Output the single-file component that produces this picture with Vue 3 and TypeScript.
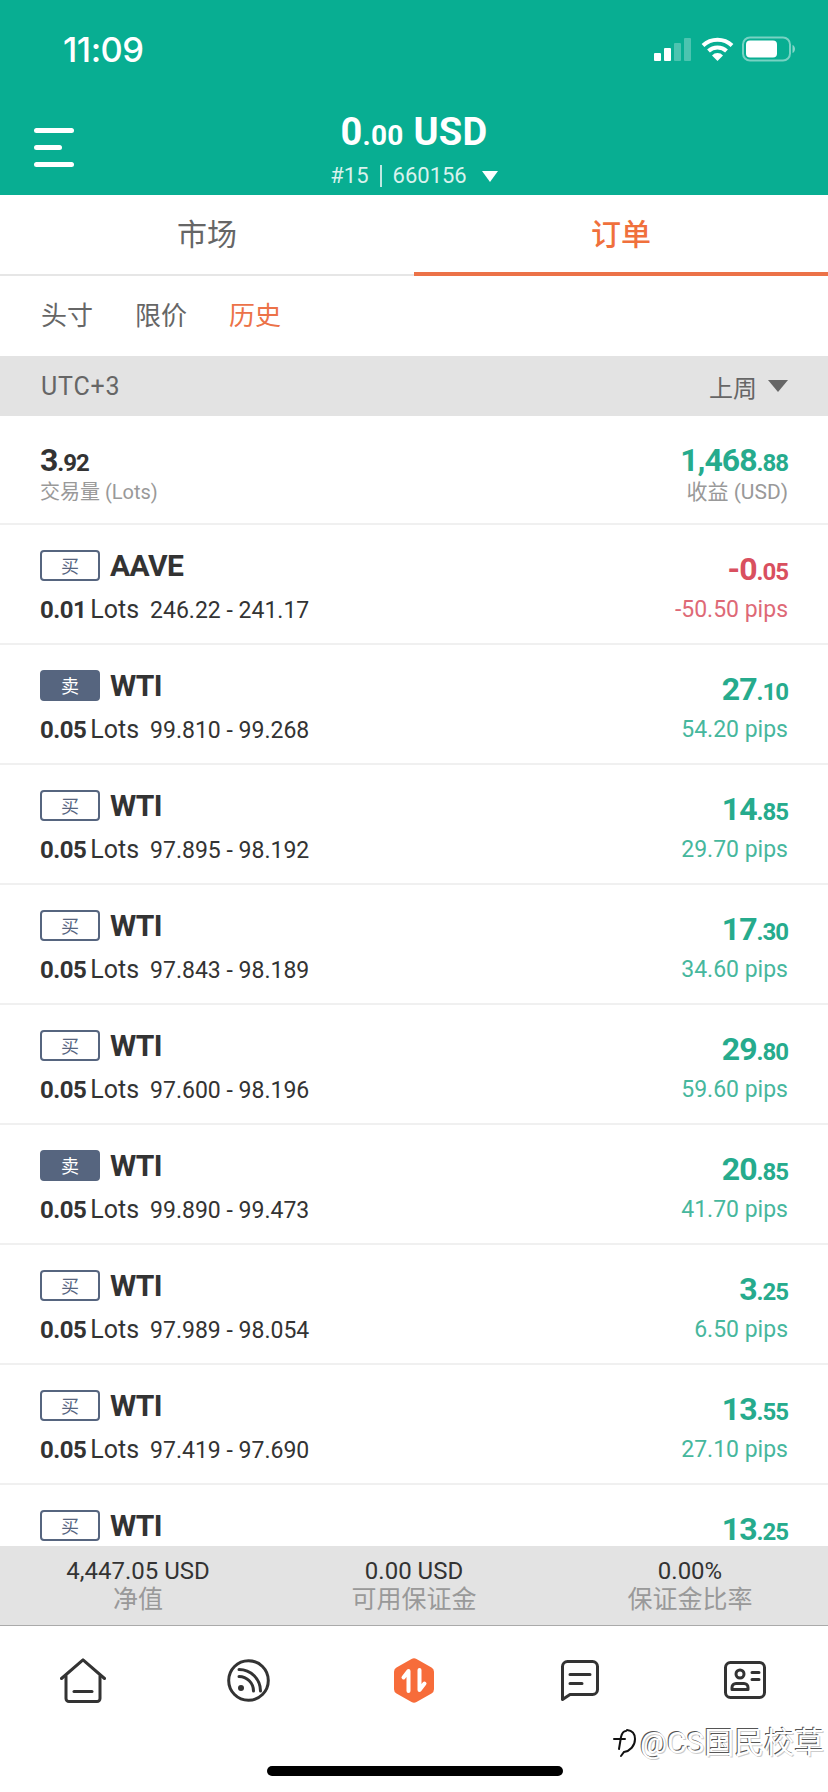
<template>
  <div class="screen">
    <header class="top">
      <div class="status">
        <span class="clock">11:09</span>
        <div class="status-icons">
          <svg class="signal" width="40" height="26" viewBox="0 0 40 26">
            <rect x="3" y="17" width="7" height="8" rx="1" fill="#fff" />
            <rect x="13" y="12" width="7" height="13" rx="1" fill="#fff" />
            <rect x="23" y="7" width="7" height="18" rx="1" fill="#fff" opacity=".28" />
            <rect x="33" y="2" width="7" height="23" rx="1" fill="#fff" opacity=".28" />
          </svg>
          <svg width="33" height="26" viewBox="0 0 33 26" fill="none" stroke="#fff" stroke-width="4">
            <path d="M2 9.500a21 21 0 0 1 29 0" />
            <path d="M7.500 15a13 13 0 0 1 18 0" />
            <path d="M16.500 25l-5.500-5.500a7.500 7.500 0 0 1 11 0z" fill="#fff" stroke="none" />
          </svg>
          <svg width="54" height="26" viewBox="0 0 54 26">
            <rect x="1" y="1.500" width="47" height="23" rx="7" fill="none" stroke="#fff" stroke-opacity=".45" stroke-width="2" />
            <rect x="4" y="4.500" width="31" height="17" rx="4" fill="#fff" />
            <path d="M50.500 9v8c1.500-.5 2.500-2.200 2.500-4s-1-3.500-2.500-4z" fill="#fff" fill-opacity=".5" />
          </svg>
        </div>
      </div>
      <div class="account">
        <button class="menu" type="button" aria-label="menu">
          <i class="long"></i><i class="short"></i><i class="long"></i>
        </button>
        <div class="balance">0<span class="cents">.00</span> USD</div>
        <div class="acc-no">#15<span class="pipe"></span>660156<span class="acc-arrow"></span></div>
      </div>
    </header>

    <nav class="tabs">
      <div class="tab">市场</div>
      <div class="tab active">订单</div>
    </nav>

    <div class="subtabs">
      <span>头寸</span>
      <span>限价</span>
      <span class="on">历史</span>
    </div>

    <div class="range">
      <span class="utc">UTC+3</span>
      <span class="range-right">上周<i class="range-arrow"></i></span>
    </div>

    <div class="list">
      <div class="summary">
        <div>
          <div class="amount dark">3<small>.92</small></div>
          <div class="caption left">交易量 (Lots)</div>
        </div>
        <div class="right">
          <div class="amount up">1,468<small>.88</small></div>
          <div class="caption">收益 (USD)</div>
        </div>
      </div>

      <div v-for="(o, i) in orders" :key="i" class="row">
        <div>
          <div class="row-head">
            <span class="side" :class="{ sell: o.sell }">{{ o.sell ? '卖' : '买' }}</span>
            <span class="symbol">{{ o.symbol }}</span>
          </div>
          <div v-if="o.prices" class="row-sub">
            <b>{{ o.lots }}</b><span class="lots">Lots</span><span class="prices">{{ o.prices }}</span>
          </div>
        </div>
        <div class="right" :class="o.loss ? 'down' : 'up'">
          <div class="amount">{{ o.whole }}<small>{{ o.cents }}</small></div>
          <div v-if="o.pips" class="pips">{{ o.pips }} pips</div>
        </div>
      </div>
    </div>

    <div class="totals">
      <div v-for="t in totals" :key="t.label" class="total">
        <div class="total-val">{{ t.value }}</div>
        <div class="total-label">{{ t.label }}</div>
      </div>
    </div>

    <footer class="bottom">
      <svg width="46" height="45" viewBox="0 0 46 45" fill="none" stroke="#333" stroke-width="3" stroke-linecap="round" stroke-linejoin="round">
        <path d="M1.500 20.500L23 1.800l21.500 18.700" />
        <path d="M6 18v22.500a3 3 0 0 0 3 3h28a3 3 0 0 0 3-3V18" />
        <path d="M14 33.500h18" />
      </svg>
      <svg width="43" height="43" viewBox="0 0 43 43" fill="none" stroke="#333" stroke-width="3" stroke-linecap="round">
        <circle cx="21.500" cy="21.500" r="19.800" />
        <path d="M12 17.500a14.500 14.500 0 0 1 14.500 14.500" />
        <path d="M12 10.500a21.500 21.500 0 0 1 21.500 21.500" />
        <circle cx="14" cy="29" r="3" fill="#333" stroke="none" />
      </svg>
      <svg width="40" height="45" viewBox="0 0 40 45">
        <path d="M17.500 1a5 5 0 0 1 5 0l15 8.500a5 5 0 0 1 2.500 4.300v17.400a5 5 0 0 1-2.500 4.300l-15 8.500a5 5 0 0 1-5 0l-15-8.500A5 5 0 0 1 0 31.200V13.800a5 5 0 0 1 2.500-4.300z" fill="#f76c3a" />
        <path d="M14.500 33V13l-5 6.500M25.500 12v20l5-6.500" fill="none" stroke="#fff" stroke-width="4" stroke-linecap="round" stroke-linejoin="round" />
      </svg>
      <svg width="38" height="41" viewBox="0 0 38 41" fill="none" stroke="#333" stroke-width="3" stroke-linecap="round" stroke-linejoin="round">
        <path d="M1.500 6.500a5 5 0 0 1 5-5h25a5 5 0 0 1 5 5v23a5 5 0 0 1-5 5H9l-7.500 5z" />
        <path d="M9 14.500h20M9 23.500h12" />
      </svg>
      <svg width="42" height="38" viewBox="0 0 42 38" fill="none" stroke="#333" stroke-width="3" stroke-linecap="round" stroke-linejoin="round">
        <rect x="1.500" y="1.500" width="39" height="35" rx="5" />
        <circle cx="16" cy="13" r="4" />
        <path d="M8 28.500v-2a4 4 0 0 1 4-4h8a4 4 0 0 1 4 4v2z" />
        <path d="M28 11.500h7M28 18.500h7" />
      </svg>
    </footer>

    <div class="watermark">
      <svg width="24" height="32" viewBox="0 0 24 32" fill="none" stroke="#111" stroke-width="2" stroke-linecap="round">
        <path d="M15 3c5 .5 8 4 8 9 0 7-5 12-11 13l-3 4" />
        <path d="M14 4c-3 0-4 2-5 6L7 22M2 12h11" />
      </svg>
      <span>@CS国民校草</span>
    </div>
    <div class="home-bar"></div>
  </div>
</template>

<script setup lang="ts">
interface Order {
  symbol: string
  sell?: boolean
  loss?: boolean
  lots?: string
  prices?: string
  whole: string
  cents: string
  pips?: string
}

const wti = (sell: boolean, prices: string, whole: string, cents: string, pips: string): Order => ({
  symbol: 'WTI', sell, lots: '0.05', prices, whole, cents, pips,
})

const orders: Order[] = [
  { symbol: 'AAVE', loss: true, lots: '0.01', prices: '246.22 - 241.17', whole: '-0', cents: '.05', pips: '-50.50' },
  wti(true, '99.810 - 99.268', '27', '.10', '54.20'),
  wti(false, '97.895 - 98.192', '14', '.85', '29.70'),
  wti(false, '97.843 - 98.189', '17', '.30', '34.60'),
  wti(false, '97.600 - 98.196', '29', '.80', '59.60'),
  wti(true, '99.890 - 99.473', '20', '.85', '41.70'),
  wti(false, '97.989 - 98.054', '3', '.25', '6.50'),
  wti(false, '97.419 - 97.690', '13', '.55', '27.10'),
  // cut off by the totals bar, only the first line shows
  { symbol: 'WTI', whole: '13', cents: '.25' },
]

const totals = [
  { value: '4,447.05 USD', label: '净值' },
  { value: '0.00 USD', label: '可用保证金' },
  { value: '0.00%', label: '保证金比率' },
]
</script>

<style>
html, body { margin: 0; background: #fff; }
</style>

<style scoped>
.screen {
  width: 828px;
  height: 1792px;
  position: relative;
  display: flex;
  flex-direction: column;
  overflow: hidden;
  background: #fff;
  font-family: Roboto, "Noto Sans CJK SC", sans-serif;
  color: #333;
}
.top { height: 195px; background: #08ae92; color: #fff; flex: none; display: flex; flex-direction: column; }
.status { height: 98px; padding: 0 32px 0 63px; display: flex; align-items: center; justify-content: space-between; box-sizing: border-box; }
.clock { font-size: 34.500px; font-weight: 500; font-family: Inter, sans-serif; letter-spacing: -0.5px; }
.status-icons { display: flex; align-items: center; gap: 8px; }
.signal { margin-right: 2px; }
.account { position: relative; text-align: center; }
.menu { position: absolute; left: 34px; top: 30px; width: 40px; padding: 0; background: none; border: 0; display: flex; flex-direction: column; gap: 12px; }
.menu i { display: block; height: 5px; background: #fff; border-radius: 3px; }
.menu .short { width: 28px; }
.balance { font-size: 38px; font-weight: 700; line-height: 44px; margin-top: 12px; letter-spacing: .3px; }
.cents { font-size: 28px; }
.acc-no { display: flex; justify-content: center; align-items: center; font-size: 22px; line-height: 30px; margin-top: 3px; color: #d9f2ed; }
.pipe { width: 2px; height: 22px; background: #bfe9e1; margin: 0 11px; }
.acc-arrow { width: 0; height: 0; margin-left: 15px; border: 8px solid transparent; border-top: 11px solid #fff; border-bottom: 0; }

.tabs { height: 81px; flex: none; display: flex; }
.tab { flex: 1; display: flex; align-items: center; justify-content: center; font-size: 30px; color: #666; border-bottom: 2px solid #e6e6e6; box-sizing: border-box; padding-bottom: 5px; }
.tab.active { color: #f0703c; border-bottom: 4px solid #ec7248; font-weight: 500; padding-bottom: 3px; }

.subtabs { height: 80px; flex: none; display: flex; align-items: center; gap: 42px; padding: 0 41px 5px; font-size: 26px; color: #666; box-sizing: border-box; }
.subtabs .on { color: #ec7248; }

.range { height: 60px; flex: none; background: #e3e3e3; display: flex; align-items: center; justify-content: space-between; padding: 0 40px 0 41px; font-size: 24px; color: #666; }
.utc { font-size: 25px; letter-spacing: .8px; }
.range-right { display: flex; align-items: center; gap: 11px; }
.range-arrow { width: 0; height: 0; border: 10px solid transparent; border-top: 12px solid #666; border-bottom: 0; }

.list { flex: 1; min-height: 0; overflow: hidden; }
.summary { height: 109px; box-sizing: border-box; padding: 27px 40px 0 40px; display: flex; justify-content: space-between; border-bottom: 2px solid #f0f0f0; }
.amount { font-size: 32px; font-weight: 700; line-height: 34px; letter-spacing: -1px; }
.amount small { font-size: 24px; }
.caption { font-size: 21px; line-height: 26px; color: #999; margin-top: -1px; }
.caption.left { font-size: 20px; }
.dark { color: #333; }
.up { color: #26ab8d; }
.down { color: #d9505f; }
.right { text-align: right; }

.row { height: 120px; box-sizing: border-box; padding: 25px 40px 0 40px; display: flex; justify-content: space-between; border-bottom: 2px solid #f0f0f0; }
.row-head { display: flex; align-items: center; gap: 10px; height: 32px; }
.side { width: 60px; height: 31px; box-sizing: border-box; border: 2px solid #56657f; border-radius: 4px; display: flex; align-items: center; justify-content: center; font-size: 18px; color: #56657f; margin-bottom: 2px; }
.side.sell { background: #56657f; color: #fff; }
.symbol { font-size: 30px; font-weight: 700; color: #333; line-height: 32px; letter-spacing: -.6px; }
.row-sub { display: flex; align-items: baseline; margin-top: 11px; line-height: 34px; font-size: 24px; }
.row-sub b { font-weight: 700; letter-spacing: -.5px; }
.lots { margin-left: 4px; font-size: 25px; }
.prices { margin-left: 11px; font-size: 23px; }
.row .amount { margin-top: 2px; }
.pips { font-size: 23px; line-height: 34px; margin-top: 4px; opacity: .85; }

.totals { height: 80px; flex: none; background: #e3e3e3; display: flex; border-bottom: 1px solid #aaa; box-sizing: border-box; padding-top: 11px; }
.total { flex: 1; text-align: center; }
.total-val { font-size: 24px; line-height: 28px; color: #333; }
.total-label { font-size: 25px; line-height: 30px; color: #999; }

.bottom { height: 166px; flex: none; box-sizing: border-box; padding-bottom: 58px; display: grid; grid-template-columns: repeat(5, 1fr); align-items: center; justify-items: center; }

.watermark { position: absolute; left: 612px; top: 1726px; display: flex; align-items: center; gap: 4px; font-size: 30px; line-height: 34px; white-space: nowrap; color: #fff; text-shadow: -1px -1px 0 #555, 1px 1px 0 #ccc; }
.home-bar { position: absolute; left: 267px; top: 1766px; width: 296px; height: 10px; border-radius: 5px; background: #000; }
</style>
